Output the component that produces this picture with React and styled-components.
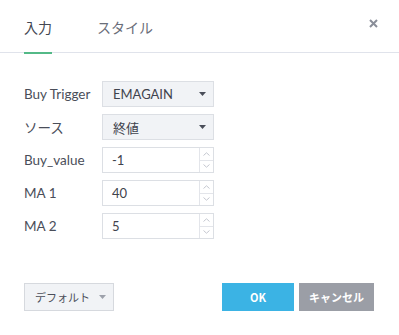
import React, { useState } from "react";
import styled, { createGlobalStyle } from "styled-components";

const GlobalStyle = createGlobalStyle`
  html, body {
    margin: 0;
    padding: 0;
    background: #fff;
  }
  body {
    font-family: "Trebuchet MS", "Lato", "Noto Sans CJK JP", sans-serif;
    color: #4a4e59;
  }
`;

const rows = [
  { label: "Buy Trigger", kind: "select", value: "EMAGAIN" },
  { label: "ソース", kind: "select", value: "終値" },
  { label: "Buy_value", kind: "number", value: "-1" },
  { label: "MA 1", kind: "number", value: "40" },
  { label: "MA 2", kind: "number", value: "5" },
];

const Caret = ({ color = "#4a4e59" }) => (
  <svg width="7" height="4" viewBox="0 0 7 4">
    <path d="M0 0h7L3.5 4z" fill={color} />
  </svg>
);

const Chevron = ({ up }) => (
  <svg width="7" height="4" viewBox="0 0 7 4">
    <path
      d={up ? "M0.5 3.5L3.5 0.8L6.5 3.5" : "M0.5 0.5L3.5 3.2L6.5 0.5"}
      fill="none"
      stroke="#c4c7cf"
      strokeWidth="1"
    />
  </svg>
);

const App = () => {
  const [tab, setTab] = useState(0);

  return (
    <>
      <GlobalStyle />
      <Dialog>
        <Header>
          <Tab active={tab === 0} onClick={() => setTab(0)}>
            入力
          </Tab>
          <Tab active={tab === 1} onClick={() => setTab(1)}>
            スタイル
          </Tab>
          <CloseBtn>
            <svg width="9" height="9" viewBox="0 0 9 9">
              <path
                d="M1 1L8 8M8 1L1 8"
                stroke="#8a8e99"
                strokeWidth="2"
              />
            </svg>
          </CloseBtn>
        </Header>

        <Form>
          {rows.map((row) => (
            <React.Fragment key={row.label}>
              <Label>{row.label}</Label>
              {row.kind === "select" ? (
                <Select>
                  <span>{row.value}</span>
                  <Caret />
                </Select>
              ) : (
                <NumberBox>
                  <NumberValue>{row.value}</NumberValue>
                  <Spinner>
                    <SpinBtn>
                      <Chevron up />
                    </SpinBtn>
                    <SpinBtn>
                      <Chevron />
                    </SpinBtn>
                  </Spinner>
                </NumberBox>
              )}
            </React.Fragment>
          ))}
        </Form>

        <Footer>
          <DefaultBtn>
            デフォルト
            <Caret color="#9da1ab" />
          </DefaultBtn>
          <Spacer />
          <ActionBtn bg="#3bb3e4">OK</ActionBtn>
          <ActionBtn bg="#9b9ea6">キャンセル</ActionBtn>
        </Footer>
      </Dialog>
    </>
  );
};

export default App;

const Dialog = styled.div`
  width: 399px;
  height: 335px;
  display: flex;
  flex-direction: column;
  background: #fff;
`;

const Header = styled.div`
  height: 52px;
  display: flex;
  align-items: stretch;
  padding-left: 24px;
  padding-right: 20px;
  border-bottom: 1px solid #e0e3eb;
  gap: 45px;
`;

const Tab = styled.div`
  height: 51px;
  margin-bottom: -1px;
  display: flex;
  align-items: center;
  padding-top: 1px;
  font-family: "Noto Sans CJK JP", sans-serif;
  font-size: 14px;
  color: ${(p) => (p.active ? "#434752" : "#6a6e79")};
  border-bottom: 2px solid ${(p) => (p.active ? "#53b987" : "transparent")};
  cursor: pointer;
`;

const CloseBtn = styled.div`
  margin-left: auto;
  display: flex;
  align-items: flex-start;
  padding-top: 19px;
  padding-right: 1px;
  cursor: pointer;
`;

const Form = styled.div`
  display: grid;
  grid-template-columns: 78px 112px;
  grid-auto-rows: 26px;
  row-gap: 7px;
  padding: 28px 0 0 24px;
  align-items: center;
`;

const Label = styled.div`
  font-size: 13.5px;
  color: #4a4e59;
`;

const Select = styled.div`
  height: 26px;
  box-sizing: border-box;
  display: flex;
  align-items: center;
  justify-content: space-between;
  padding: 0 7px 0 10px;
  background: #f1f3f6;
  border: 1px solid #dcdfe4;
  font-size: 13px;
  color: #3f434d;
`;

const NumberBox = styled.div`
  height: 26px;
  box-sizing: border-box;
  display: flex;
  border: 1px solid #dcdfe4;
  background: #fff;
`;

const NumberValue = styled.div`
  flex: 1;
  display: flex;
  align-items: center;
  padding-left: 9px;
  font-size: 13px;
  color: #3f434d;
`;

const Spinner = styled.div`
  width: 13px;
  display: flex;
  flex-direction: column;
  border-left: 1px solid #e3e5ea;
`;

const SpinBtn = styled.div`
  flex: 1;
  display: flex;
  align-items: center;
  justify-content: center;
  & + & {
    border-top: 1px solid #e3e5ea;
  }
`;

const Footer = styled.div`
  margin-top: auto;
  display: flex;
  align-items: center;
  gap: 5px;
  padding: 0 25px 24px 24px;
`;

const Spacer = styled.div`
  flex: 1;
`;

const DefaultBtn = styled.div`
  width: 90px;
  height: 28px;
  box-sizing: border-box;
  display: flex;
  align-items: center;
  gap: 9px;
  padding-left: 10px;
  background: #f1f3f6;
  border: 1px solid #d6d9de;
  font-family: "Noto Sans CJK JP", sans-serif;
  font-size: 11px;
  color: #4a4e59;
`;

const ActionBtn = styled.div`
  min-width: 72px;
  height: 28px;
  padding: 0 10px;
  box-sizing: border-box;
  display: flex;
  align-items: center;
  justify-content: center;
  background: ${(p) => p.bg};
  color: #fff;
  font-family: "Noto Sans CJK JP", sans-serif;
  font-weight: 700;
  font-size: 11px;
  cursor: pointer;
`;
